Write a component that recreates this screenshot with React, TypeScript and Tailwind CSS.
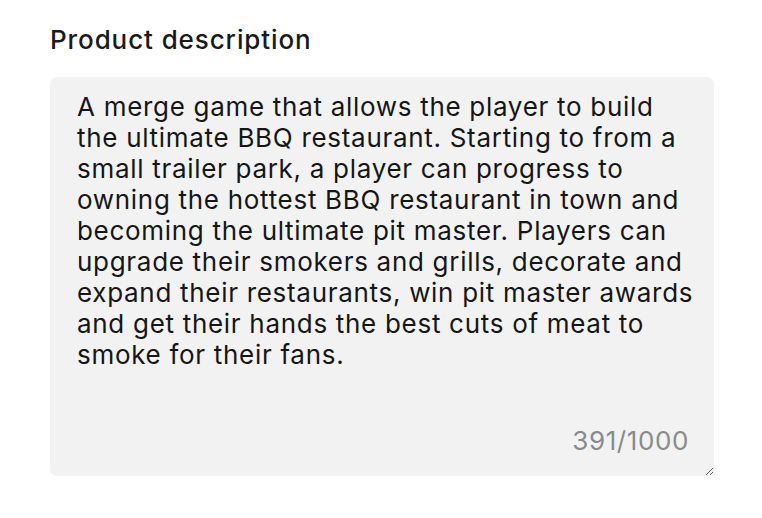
import { useState } from 'react';

const initial =
  'A merge game that allows the player to build the ultimate BBQ restaurant. Starting to from a small trailer park, a player can progress to owning the hottest BBQ restaurant in town and becoming the ultimate pit master. Players can upgrade their smokers and grills, decorate and expand their restaurants, win pit master awards and get their hands the best cuts of meat to smoke for their fans.';

export default function App() {
  const [text, setText] = useState(initial);

  return (
    <div className="min-h-screen bg-white pl-[50px] pt-[24px] font-['Inter',sans-serif]">
      <label className="block text-[26px] font-medium leading-[32px] text-[#1a1a1a] tracking-[0.9px]">
        Product description
      </label>
      <div className="relative mt-[21px] w-[664px]">
        <textarea
          value={text}
          maxLength={1000}
          onChange={(e) => setText(e.target.value)}
          className="block h-[399px] w-full resize rounded-[7px] bg-[#f2f2f2] pl-[27px] pr-[20px] pt-[14px] text-[26px] leading-[31px] tracking-[0.7px] text-[#161616] outline-none"
        />
        <span className="pointer-events-none absolute bottom-[20px] right-[25px] text-[26px] leading-[31px] tracking-[0.6px] text-[#8a8a8a]">
          {text.length}/1000
        </span>
      </div>
    </div>
  );
}
